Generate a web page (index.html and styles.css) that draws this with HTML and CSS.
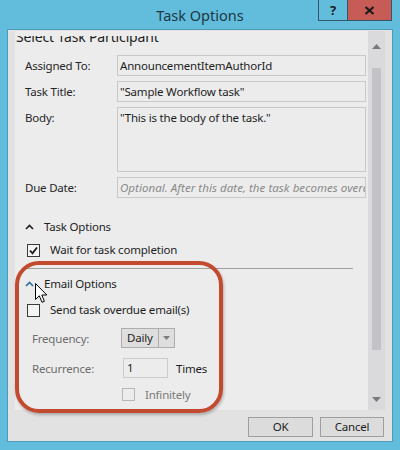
FILE: index.html
```html
<!DOCTYPE html>
<html>
<head>
<meta charset="utf-8">
<link rel="stylesheet" href="styles.css">
</head>
<body>
<div class="window">
  <div class="titlebar">
    <div class="title">Task Options</div>
    <div class="controls">
      <div class="ctl ctl-help">?</div>
      <div class="ctl ctl-close">
        <svg width="11" height="9" viewBox="0 0 11 9"><path d="M1.5 1 L9.5 8 M9.5 1 L1.5 8" stroke="#1b1b1b" stroke-width="2.2" fill="none"/></svg>
      </div>
    </div>
  </div>
  <div class="client">
    <div class="panel">
      <div class="viewport">
        <div class="content">
          <div class="heading">Select Task Participant</div>
          <div class="form">
            <div class="label">Assigned To:</div>
            <div class="field">AnnouncementItemAuthorId</div>
            <div class="label">Task Title:</div>
            <div class="field">"Sample Workflow task"</div>
            <div class="label">Body:</div>
            <div class="field field-area">"This is the body of the task."</div>
            <div class="label">Due Date:</div>
            <div class="field field-hint">Optional. After this date, the task becomes overdue.</div>
          </div>
          <div class="section section-task">
            <svg class="caret" width="9" height="6" viewBox="0 0 9 6"><polyline points="1,5 4.5,1.5 8,5" fill="none" stroke="#222" stroke-width="1.7"/></svg>
            <span>Task Options</span>
          </div>
          <div class="check-row row-wait">
            <span class="box">
              <svg width="11" height="11" viewBox="0 0 11 11"><polyline points="2,5.5 4.5,8.3 9,2.5" fill="none" stroke="#1a1a1a" stroke-width="1.8"/></svg>
            </span>
            <span>Wait for task completion</span>
          </div>
          <div class="rule"></div>
          <div class="section section-email">
            <svg class="caret" width="9" height="6" viewBox="0 0 9 6"><polyline points="1,5 4.5,1.5 8,5" fill="none" stroke="#2d6fa6" stroke-width="1.7"/></svg>
            <span>Email Options</span>
          </div>
          <div class="check-row row-send">
            <span class="box"></span>
            <span>Send task overdue email(s)</span>
          </div>
          <div class="opt-row row-freq">
            <span class="opt-label">Frequency:</span>
            <span class="dropdown">
              <span class="dd-value">Daily</span>
              <span class="dd-arrow">
                <svg width="7" height="4" viewBox="0 0 7 4"><polygon points="0,0 7,0 3.5,4" fill="#7d7d7d"/></svg>
              </span>
            </span>
          </div>
          <div class="opt-row row-rec">
            <span class="opt-label">Recurrence:</span>
            <span class="num-input">1</span>
            <span class="times">Times</span>
          </div>
          <div class="opt-row row-inf">
            <span class="opt-label"></span>
            <span class="box box-disabled"></span>
            <span class="inf-text">Infinitely</span>
          </div>
        </div>
      </div>
      <div class="scrollbar">
        <svg class="sb-arrow sb-up" width="9" height="5" viewBox="0 0 9 5"><polygon points="0,5 9,5 4.5,0" fill="#7a7a7c"/></svg>
        <div class="sb-track"><div class="sb-thumb"></div></div>
        <svg class="sb-arrow sb-down" width="9" height="5" viewBox="0 0 9 5"><polygon points="0,0 9,0 4.5,5" fill="#7a7a7c"/></svg>
      </div>
    </div>
    <div class="footer">
      <div class="button btn-ok">OK</div>
      <div class="button btn-cancel">Cancel</div>
    </div>
  </div>
  <div class="highlight"></div>
  <svg class="cursor" width="13" height="21" viewBox="0 0 13 21"><path d="M0.5 0.5 L0.5 16.5 L4.3 12.8 L7 19.3 L9.4 18.3 L6.8 12 L11.8 12 Z" fill="#fff" stroke="#000" stroke-width="1" stroke-linejoin="round"/></svg>
</div>
</body>
</html>
```

FILE: styles.css
```css
html, body {
  margin: 0;
  padding: 0;
  background: #62bddc;
}

.window {
  position: relative;
  width: 400px;
  height: 450px;
  background: #62bddc;
  font-family: "Noto Sans", "Open Sans", sans-serif;
  font-size: 11.5px;
  letter-spacing: -0.2px;
  color: #1e1e1e;
  overflow: hidden;
}

.titlebar {
  height: 30px;
  display: grid;
  grid-template-columns: 1fr auto 1fr;
}

.title {
  grid-column: 2;
  font-size: 14.5px;
  letter-spacing: 0;
  line-height: 30px;
  color: #1d3846;
}

.controls {
  grid-column: 3;
  justify-self: end;
  align-self: start;
  display: flex;
  margin-right: 8px;
}

.ctl {
  height: 20px;
  border: 1px solid #36596a;
  border-top: none;
  display: flex;
  align-items: center;
  justify-content: center;
  font-weight: bold;
  font-size: 13px;
  letter-spacing: 0;
  color: #1b1b1b;
}

.ctl-help {
  width: 28px;
  background: #62bddc;
  border-right: none;
}

.ctl-close {
  width: 43px;
  background: #c65c55;
}

.client {
  margin: 0 8px;
  height: 411px;
  background: #e2e2e2;
  box-shadow: 0 0 0 1px #4f9cba;
  display: flex;
  flex-direction: column;
}

.panel {
  margin: 1px 0 0 7px;
  width: 370px;
  height: 379px;
  background: #ececec;
  display: flex;
}

.viewport {
  width: 353px;
  margin-top: 5px;
  height: 374px;
  overflow: hidden;
}

.content {
  padding: 0 2px 0 1px;
  display: flex;
  flex-direction: column;
}

.heading {
  margin-top: -9px;
  font-size: 14px;
  letter-spacing: -0.15px;
  line-height: 19px;
  height: 19px;
  color: #1e1e1e;
  white-space: nowrap;
}

.form {
  margin: 9px 0 0 9px;
  display: grid;
  grid-template-columns: 92px 249px;
  grid-template-rows: 21px 21px 65px 21px;
  row-gap: 5px;
}

.label {
  padding-top: 3px;
  line-height: 16px;
  color: #262626;
}

.field {
  box-sizing: border-box;
  border: 1px solid #c9c9c9;
  padding: 1px 2px;
  line-height: 17px;
  white-space: nowrap;
  overflow: hidden;
  color: #1e1e1e;
}

.field-area {
  white-space: normal;
}

.field-hint {
  font-style: italic;
  letter-spacing: 0.05px;
  color: #8a8a8a;
}

.section {
  margin-left: 9px;
  height: 18px;
  display: flex;
  align-items: center;
  gap: 10px;
  line-height: 18px;
}

.caret {
  width: 9px;
  height: 6px;
}

.section-task {
  margin-top: 20px;
}

.section-email {
  margin-top: 6px;
}

.check-row {
  margin-left: 11px;
  height: 18px;
  display: flex;
  align-items: center;
  gap: 10px;
  line-height: 18px;
}

.row-wait {
  margin-top: 5px;
}

.row-send {
  margin-top: 8px;
}

.box {
  box-sizing: border-box;
  width: 13px;
  height: 13px;
  border: 1px solid #3a3a3a;
  background: #f4f4f4;
  display: flex;
  align-items: center;
  justify-content: center;
}

.box-disabled {
  border-color: #b8b8b8;
  background: #ececec;
}

.rule {
  margin: 9px 0 0 9px;
  width: 328px;
  height: 1px;
  background: #a0a0a0;
}

.opt-row {
  margin-left: 16px;
  display: flex;
  align-items: center;
}

.opt-label {
  width: 89px;
  flex: none;
  color: #6c6c6c;
}

.row-freq {
  margin-top: 9px;
  height: 20px;
}

.row-rec {
  margin-top: 10px;
  height: 20px;
}

.row-inf {
  margin-top: 7px;
  height: 18px;
}

.dropdown {
  box-sizing: border-box;
  width: 54px;
  height: 20px;
  border: 1px solid #adadad;
  background: #dedede;
  display: flex;
}

.dd-value {
  width: 37px;
  padding-left: 5px;
  box-sizing: border-box;
  line-height: 18px;
  border-right: 1px solid #adadad;
  color: #1e1e1e;
}

.dd-arrow {
  flex: 1;
  display: flex;
  align-items: center;
  justify-content: center;
}

.num-input {
  box-sizing: border-box;
  margin-left: 2px;
  width: 45px;
  height: 20px;
  border: 1px solid #cbcbcb;
  padding-left: 3px;
  line-height: 18px;
  color: #1e1e1e;
}

.times {
  margin-left: 8px;
  color: #1e1e1e;
}

.row-inf .box {
  margin-left: 1px;
}

.inf-text {
  margin-left: 10px;
  color: #7a7a7a;
}

.scrollbar {
  width: 17px;
  background: #dadadd;
  display: flex;
  flex-direction: column;
  align-items: center;
}

.sb-up {
  margin-top: 13px;
}

.sb-track {
  flex: 1;
  width: 9px;
  padding-top: 19px;
  padding-bottom: 47px;
  display: flex;
}

.sb-thumb {
  flex: 1;
  background: #c3c3c7;
}

.sb-down {
  margin-bottom: 8px;
}

.footer {
  display: flex;
  justify-content: flex-end;
  gap: 7px;
  padding: 7px 8px 0 0;
}

.button {
  box-sizing: border-box;
  height: 20px;
  border: 1px solid #9f9f9f;
  background: #dcdcdc;
  text-align: center;
  line-height: 18px;
  color: #1e1e1e;
}

.btn-ok {
  width: 65px;
}

.btn-cancel {
  width: 64px;
}

.highlight {
  position: absolute;
  left: 15px;
  top: 261px;
  width: 208px;
  height: 152px;
  box-sizing: border-box;
  border: 4px solid #c24a2e;
  border-radius: 24px;
  box-shadow: 1px 2px 3px rgba(0, 0, 0, 0.25);
}

.cursor {
  position: absolute;
  left: 35px;
  top: 283px;
}
```
